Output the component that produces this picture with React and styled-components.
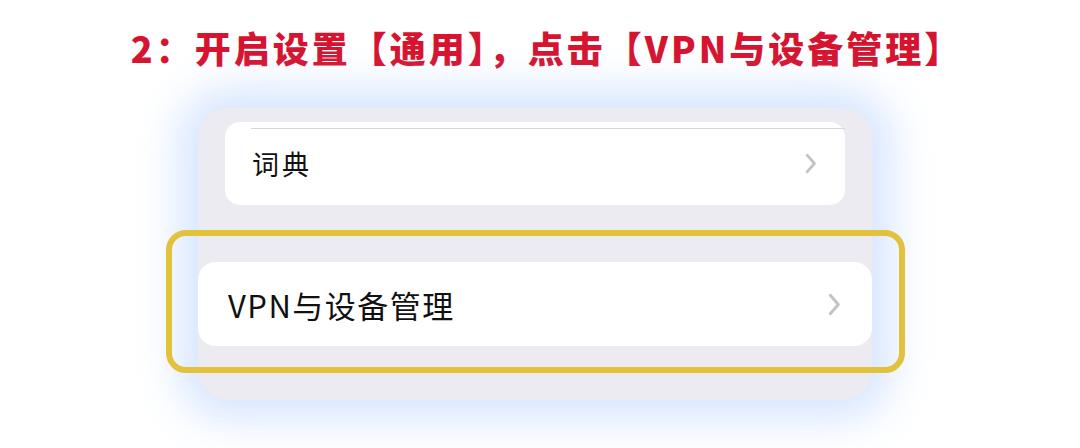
import React from 'react';
import styled, { createGlobalStyle } from 'styled-components';

const GlobalStyle = createGlobalStyle`
  html, body {
    margin: 0;
    padding: 0;
    background: #ffffff;
  }
  body {
    width: 1080px;
    height: 448px;
    overflow: hidden;
    font-family: 'Noto Sans CJK SC', 'Noto Sans', sans-serif;
  }
`;

const Page = styled.div`
  display: flex;
  flex-direction: column;
  align-items: center;
  width: 1080px;
  height: 448px;
`;

const Title = styled.h1`
  margin: 27px 0 0 14px;
  font-size: 36px;
  line-height: 41px;
  font-weight: 900;
  letter-spacing: 3px;
  color: #d7132f;
  white-space: nowrap;
`;

const Panel = styled.section`
  margin-top: 40px;
  margin-right: 10px;
  width: 674px;
  box-sizing: border-box;
  padding: 14px 0 27px;
  background: #ebebf1;
  border-radius: 30px;
  box-shadow: 0 0 44px 18px rgba(160, 196, 255, 0.45);
  display: flex;
  flex-direction: column;
`;

const Card = styled.div`
  position: relative;
  display: flex;
  align-items: center;
  justify-content: space-between;
  background: #ffffff;
  border-radius: ${(p) => p.$radius}px;
  height: ${(p) => p.$height}px;
  margin: 0 ${(p) => p.$inset}px;
  padding: 0 ${(p) => p.$padRight}px 0 ${(p) => p.$padLeft}px;
  box-sizing: border-box;
`;

const Divider = styled.div`
  position: absolute;
  top: 6px;
  left: 26px;
  right: 0;
  height: 1px;
  background: #d6d6da;
`;

const Label = styled.span`
  font-size: ${(p) => p.$size}px;
  color: #111111;
  letter-spacing: ${(p) => p.$spacing}px;
  font-weight: 400;
`;

const Highlight = styled.div`
  margin: 25px -33px 0 -32px;
  padding: 26px 27px 21px 26px;
  border: 6px solid #e2c23a;
  border-radius: 20px;
  box-sizing: border-box;
`;

const Chevron = ({ size }) => (
  <svg width={size * 0.55} height={size} viewBox="0 0 11 20" fill="none">
    <path
      d="M2 2 L9 10 L2 18"
      stroke="#c3c3c7"
      strokeWidth="2.6"
      strokeLinecap="round"
      strokeLinejoin="round"
    />
  </svg>
);

const App = () => (
  <Page>
    <GlobalStyle />
    <Title>2：开启设置【通用】，点击【VPN与设备管理】</Title>
    <Panel>
      <Card $radius={15} $height={83} $inset={27} $padLeft={27} $padRight={28}>
        <Divider />
        <Label $size={27} $spacing={3}>词典</Label>
        <Chevron size={21} />
      </Card>
      <Highlight>
        <Card $radius={18} $height={84} $inset={0} $padLeft={30} $padRight={31}>
          <Label $size={31} $spacing={1.5}>VPN与设备管理</Label>
          <Chevron size={23} />
        </Card>
      </Highlight>
    </Panel>
  </Page>
);

export default App;
